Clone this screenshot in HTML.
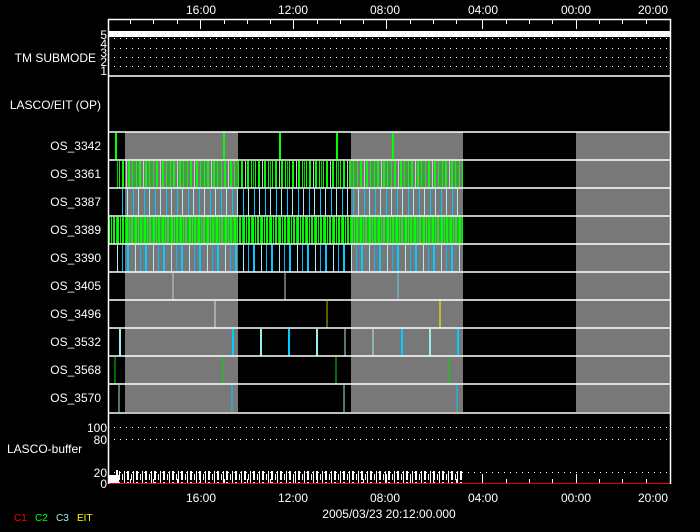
<!DOCTYPE html><html><head><style>
html,body{margin:0;padding:0;background:#000;width:700px;height:532px;overflow:hidden}
text{font-family:"Liberation Sans",sans-serif;font-size:12px;fill:#fff}
</style></head><body>
<svg width="700" height="532" xmlns="http://www.w3.org/2000/svg">
<defs>
<pattern id="g1" x="0" y="0" width="17" height="28" patternUnits="userSpaceOnUse">
<rect x="0" width="1" height="28" fill="#0f0"/><rect x="3" width="2" height="28" fill="#0f0"/><rect x="7" width="1" height="28" fill="#ccc"/><rect x="9" width="2" height="28" fill="#0f0"/><rect x="13" width="1" height="28" fill="#0f0"/><rect x="15" width="1" height="28" fill="#0c0"/>
</pattern>
<pattern id="g2" x="0" y="0" width="9" height="28" patternUnits="userSpaceOnUse">
<rect x="0" width="2" height="28" fill="#0f0"/><rect x="3" width="1" height="28" fill="#0f0"/><rect x="5" width="2" height="28" fill="#1e1"/><rect x="8" width="1" height="28" fill="#0d0"/>
</pattern>
<pattern id="c1" x="0" y="0" width="11" height="28" patternUnits="userSpaceOnUse">
<rect x="1" width="1" height="28" fill="#0cf"/><rect x="6" width="1" height="28" fill="#aee"/>
</pattern>
<pattern id="c2" x="0" y="0" width="18" height="28" patternUnits="userSpaceOnUse">
<rect x="1" width="2" height="28" fill="#0cf"/><rect x="9" width="1" height="28" fill="#aee"/><rect x="14" width="1" height="28" fill="#0bf"/>
</pattern>
<pattern id="sp" x="0" y="0" width="9" height="12" patternUnits="userSpaceOnUse">
<rect x="1" y="2" width="2" height="10" fill="#fff"/><rect x="5" y="6" width="1" height="6" fill="#fff"/><rect x="7" y="0" width="1" height="12" fill="#fff"/>
</pattern>
</defs>
<rect x="109" y="31" width="561" height="6" fill="#fff"/>
<g stroke="#fff" stroke-width="1" stroke-dasharray="1 5">
<line x1="114" y1="38.5" x2="670" y2="38.5"/>
<line x1="114" y1="48.5" x2="670" y2="48.5"/>
<line x1="114" y1="57.5" x2="670" y2="57.5"/>
<line x1="114" y1="66.5" x2="670" y2="66.5"/>
<line x1="114" y1="427.5" x2="670" y2="427.5"/>
<line x1="114" y1="439.5" x2="670" y2="439.5"/>
<line x1="114" y1="472.5" x2="670" y2="472.5"/>
</g>
<g fill="#787878">
<rect x="125" y="132" width="113" height="280"/>
<rect x="351" y="132" width="112" height="280"/>
<rect x="576" y="132" width="94" height="280"/>
</g>
<rect x="116" y="161" width="347" height="27" fill="url(#g1)"/>
<rect x="121" y="189" width="342" height="27" fill="url(#c1)"/>
<rect x="109" y="217" width="354" height="27" fill="url(#g2)"/>
<rect x="116" y="245" width="347" height="27" fill="url(#c2)"/>
<g stroke-width="2">
<path d="M116 133v27M224 133v27M280 133v27M337 133v27M393 133v27" stroke="#0f0"/>
<path d="M173 273v27M285 273v27" stroke="#ccc" stroke-width="1"/>
<path d="M398 273v27" stroke="#6ce" stroke-width="1"/>
<path d="M215 301v27" stroke="#ddd" stroke-width="1"/>
<path d="M327 301v27" stroke="#bb0" stroke-width="1"/>
<path d="M440 301v27" stroke="#ff0" stroke-width="1"/>
<path d="M120 329v27M261 329v27M317 329v27M430 329v27" stroke="#9ee"/>
<path d="M233 329v27M289 329v27M402 329v27M458 329v27" stroke="#0cf"/>
<path d="M345 329v27M373 329v27" stroke="#aee" stroke-width="1"/>
<path d="M115 357v27M223 357v27M336 357v27M449 357v27" stroke="#0d0" stroke-width="1"/>
<path d="M119 385v27M344 385v27" stroke="#9ee" stroke-width="1"/>
<path d="M232 385v27M457 385v27" stroke="#0cf" stroke-width="1"/>
</g>
<g stroke="#fff" stroke-width="1.5">
<line x1="109" y1="76" x2="670" y2="76"/>
<line x1="109" y1="132" x2="670" y2="132"/>
<line x1="109" y1="160" x2="670" y2="160"/>
<line x1="109" y1="188" x2="670" y2="188"/>
<line x1="109" y1="216" x2="670" y2="216"/>
<line x1="109" y1="244" x2="670" y2="244"/>
<line x1="109" y1="272" x2="670" y2="272"/>
<line x1="109" y1="300" x2="670" y2="300"/>
<line x1="109" y1="328" x2="670" y2="328"/>
<line x1="109" y1="356" x2="670" y2="356"/>
<line x1="109" y1="384" x2="670" y2="384"/>
<line x1="109" y1="413" x2="670" y2="413"/>
</g>
<rect x="109" y="475" width="10" height="8" fill="#fff"/>
<rect x="116" y="470" width="2" height="13" fill="#fff"/>
<rect x="119" y="471" width="343" height="12" fill="url(#sp)"/>
<line x1="109" y1="483.5" x2="670" y2="483.5" stroke="#e00" stroke-width="1"/>
<g stroke="#fff" stroke-width="1.5" fill="none">
<line x1="108.5" y1="19" x2="108.5" y2="484"/>
<line x1="670.5" y1="19" x2="670.5" y2="484"/>
<line x1="108" y1="19.5" x2="671" y2="19.5"/>
</g>
<g stroke="#fff" stroke-width="1">
<path d="M130.5 20v4M153.5 20v4M177.5 20v4M224.5 20v4M247.5 20v4M270.5 20v4M317.5 20v4M340.5 20v4M363.5 20v4M410.5 20v4M433.5 20v4M456.5 20v4M506.5 20v4M529.5 20v4M552.5 20v4M599.5 20v4M622.5 20v4M646.5 20v4"/>
<path d="M200.5 20v9M293.5 20v9M386.5 20v9M482.5 20v9M576.5 20v9"/>
<path d="M130.5 483v-4M153.5 483v-4M177.5 483v-4M224.5 483v-4M247.5 483v-4M270.5 483v-4M317.5 483v-4M340.5 483v-4M363.5 483v-4M410.5 483v-4M433.5 483v-4M456.5 483v-4M506.5 483v-4M529.5 483v-4M552.5 483v-4M599.5 483v-4M622.5 483v-4M646.5 483v-4"/>
<path d="M200.5 483v-9M293.5 483v-9M386.5 483v-9M482.5 483v-9M576.5 483v-9"/>
</g>
<g text-anchor="middle">
<text x="201" y="14">16:00</text><text x="293" y="14">12:00</text><text x="385" y="14">08:00</text><text x="483" y="14">04:00</text><text x="576" y="14">00:00</text><text x="653" y="14">20:00</text>
<text x="201" y="502">16:00</text><text x="293" y="502">12:00</text><text x="385" y="502">08:00</text><text x="483" y="502">04:00</text><text x="576" y="502">00:00</text><text x="653" y="502">20:00</text>
<text x="389" y="518">2005/03/23 20:12:00.000</text>
</g>
<g text-anchor="end">
<text x="107" y="39">5</text><text x="107" y="48">4</text><text x="107" y="57">3</text><text x="107" y="66">2</text><text x="107" y="75">1</text>
<text x="96" y="62">TM SUBMODE</text>
<text x="101" y="109">LASCO/EIT (OP)</text>
<text x="101" y="150">OS_3342</text>
<text x="101" y="178">OS_3361</text>
<text x="101" y="206">OS_3387</text>
<text x="101" y="234">OS_3389</text>
<text x="101" y="262">OS_3390</text>
<text x="101" y="290">OS_3405</text>
<text x="101" y="318">OS_3496</text>
<text x="101" y="346">OS_3532</text>
<text x="101" y="374">OS_3568</text>
<text x="101" y="402">OS_3570</text>
<text x="107" y="432">100</text><text x="107" y="444">80</text><text x="107" y="477">20</text><text x="107" y="488">0</text>
</g>
<text x="7" y="453">LASCO-buffer</text>
<text x="14" y="521" style="fill:#f00;font-size:10px">C1</text>
<text x="35" y="521" style="fill:#0f0;font-size:10px">C2</text>
<text x="56" y="521" style="fill:#9ee;font-size:10px">C3</text>
<text x="77" y="521" style="fill:#ff0;font-size:10px">EIT</text>
</svg>
</body></html>
